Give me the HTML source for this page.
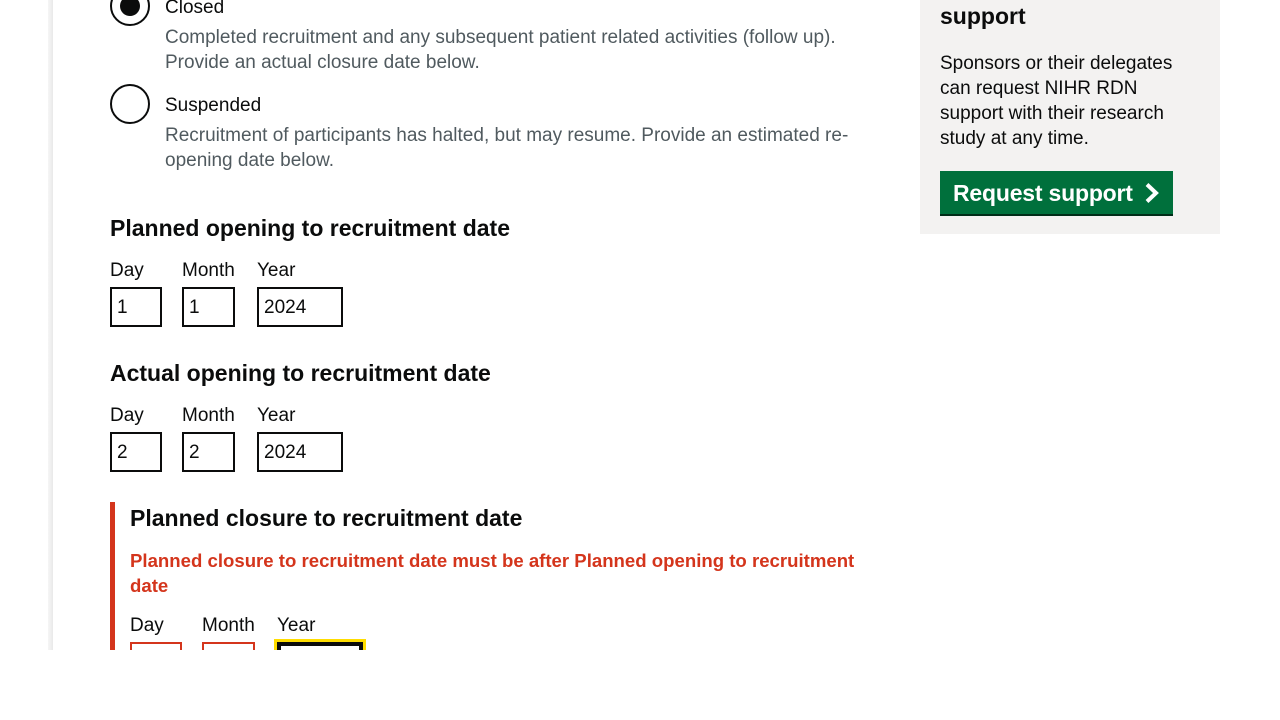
<!DOCTYPE html>
<html><head><meta charset="utf-8"><style>
*{margin:0;padding:0;box-sizing:border-box}
body{width:1280px;height:720px;position:relative;background:#fff;font-family:"Liberation Sans",sans-serif;color:#0b0c0c;overflow:hidden}
.a{position:absolute}
.shadow{left:48px;top:0;width:5px;height:650px;background:linear-gradient(to right,#f6f6f6,#e9e9e9)}
.radio{width:40px;height:40px;border:2px solid #0b0c0c;border-radius:50%}
.dot{position:absolute;left:8px;top:8px;width:20px;height:20px;border-radius:50%;background:#0b0c0c}
.lbl{font-size:19px;line-height:25px}
.hint{font-size:19px;line-height:25px;color:#505a5f}
h2{position:absolute;font-size:23px;font-weight:bold;line-height:30px}
.in{position:absolute;border:2px solid #0b0c0c;height:40px;font-size:19px;line-height:37px;padding-left:5px}
.err{color:#d4351c;font-weight:bold;font-size:19px;line-height:25px}
</style></head><body>
<div class="a shadow"></div>
<div class="a radio" style="left:110px;top:-14px"><div class="dot"></div></div>
<div class="a lbl" style="left:165px;top:-5px">Closed</div>
<div class="a hint" style="left:165px;top:25px;width:720px">Completed recruitment and any subsequent patient related activities (follow up).<br>Provide an actual closure date below.</div>
<div class="a radio" style="left:110px;top:84px"></div>
<div class="a lbl" style="left:165px;top:93px">Suspended</div>
<div class="a hint" style="left:165px;top:123px;width:720px">Recruitment of participants has halted, but may resume. Provide an estimated re-<br>opening date below.</div>

<h2 style="left:110px;top:213px">Planned opening to recruitment date</h2>
<div class="a lbl" style="left:110px;top:258px">Day</div>
<div class="a lbl" style="left:182px;top:258px">Month</div>
<div class="a lbl" style="left:257px;top:258px">Year</div>
<div class="in" style="left:110px;top:287px;width:52px">1</div>
<div class="in" style="left:182px;top:287px;width:53px">1</div>
<div class="in" style="left:257px;top:287px;width:86px">2024</div>

<h2 style="left:110px;top:358px">Actual opening to recruitment date</h2>
<div class="a lbl" style="left:110px;top:403px">Day</div>
<div class="a lbl" style="left:182px;top:403px">Month</div>
<div class="a lbl" style="left:257px;top:403px">Year</div>
<div class="in" style="left:110px;top:432px;width:52px">2</div>
<div class="in" style="left:182px;top:432px;width:53px">2</div>
<div class="in" style="left:257px;top:432px;width:86px">2024</div>

<div class="a" style="left:110px;top:502px;width:5px;height:148px;background:#d4351c"></div>
<h2 style="left:130px;top:503px">Planned closure to recruitment date</h2>
<div class="a err" style="left:130px;top:548px;width:750px;font-size:18.6px">Planned closure to recruitment date must be after Planned opening to recruitment date</div>
<div class="a lbl" style="left:130px;top:613px">Day</div>
<div class="a lbl" style="left:202px;top:613px">Month</div>
<div class="a lbl" style="left:277px;top:613px">Year</div>
<div class="a" style="left:130px;top:642px;width:52px;height:8px;border:2px solid #d4351c;border-bottom:none"></div>
<div class="a" style="left:202px;top:642px;width:53px;height:8px;border:2px solid #d4351c;border-bottom:none"></div>
<div class="a" style="left:274px;top:639px;width:92px;height:11px;background:#fd0"></div>
<div class="a" style="left:277px;top:642px;width:86px;height:8px;border:4px solid #0b0c0c;border-bottom:none;background:#fff"></div>

<div class="a" style="left:920px;top:0;width:300px;height:234px;background:#f3f2f1"></div>
<div class="a" style="left:940px;top:1px;font-size:23px;font-weight:bold;line-height:30px">support</div>
<div class="a lbl" style="left:940px;top:51px;width:260px">Sponsors or their delegates can request NIHR RDN support with their research study at any time.</div>
<div class="a" style="left:940px;top:171px;width:233px;height:45px;background:#00703c;border-bottom:2px solid #002d18;color:#fff;font-weight:bold;font-size:23px;line-height:44px;padding-left:13px;letter-spacing:-0.2px">Request support
<svg class="a" style="left:204px;top:11px" width="16" height="22" viewBox="0 0 16 22"><path d="M3 2.5 L12 11 L3 19.5" fill="none" stroke="#fff" stroke-width="4"/></svg></div>
</body></html>
